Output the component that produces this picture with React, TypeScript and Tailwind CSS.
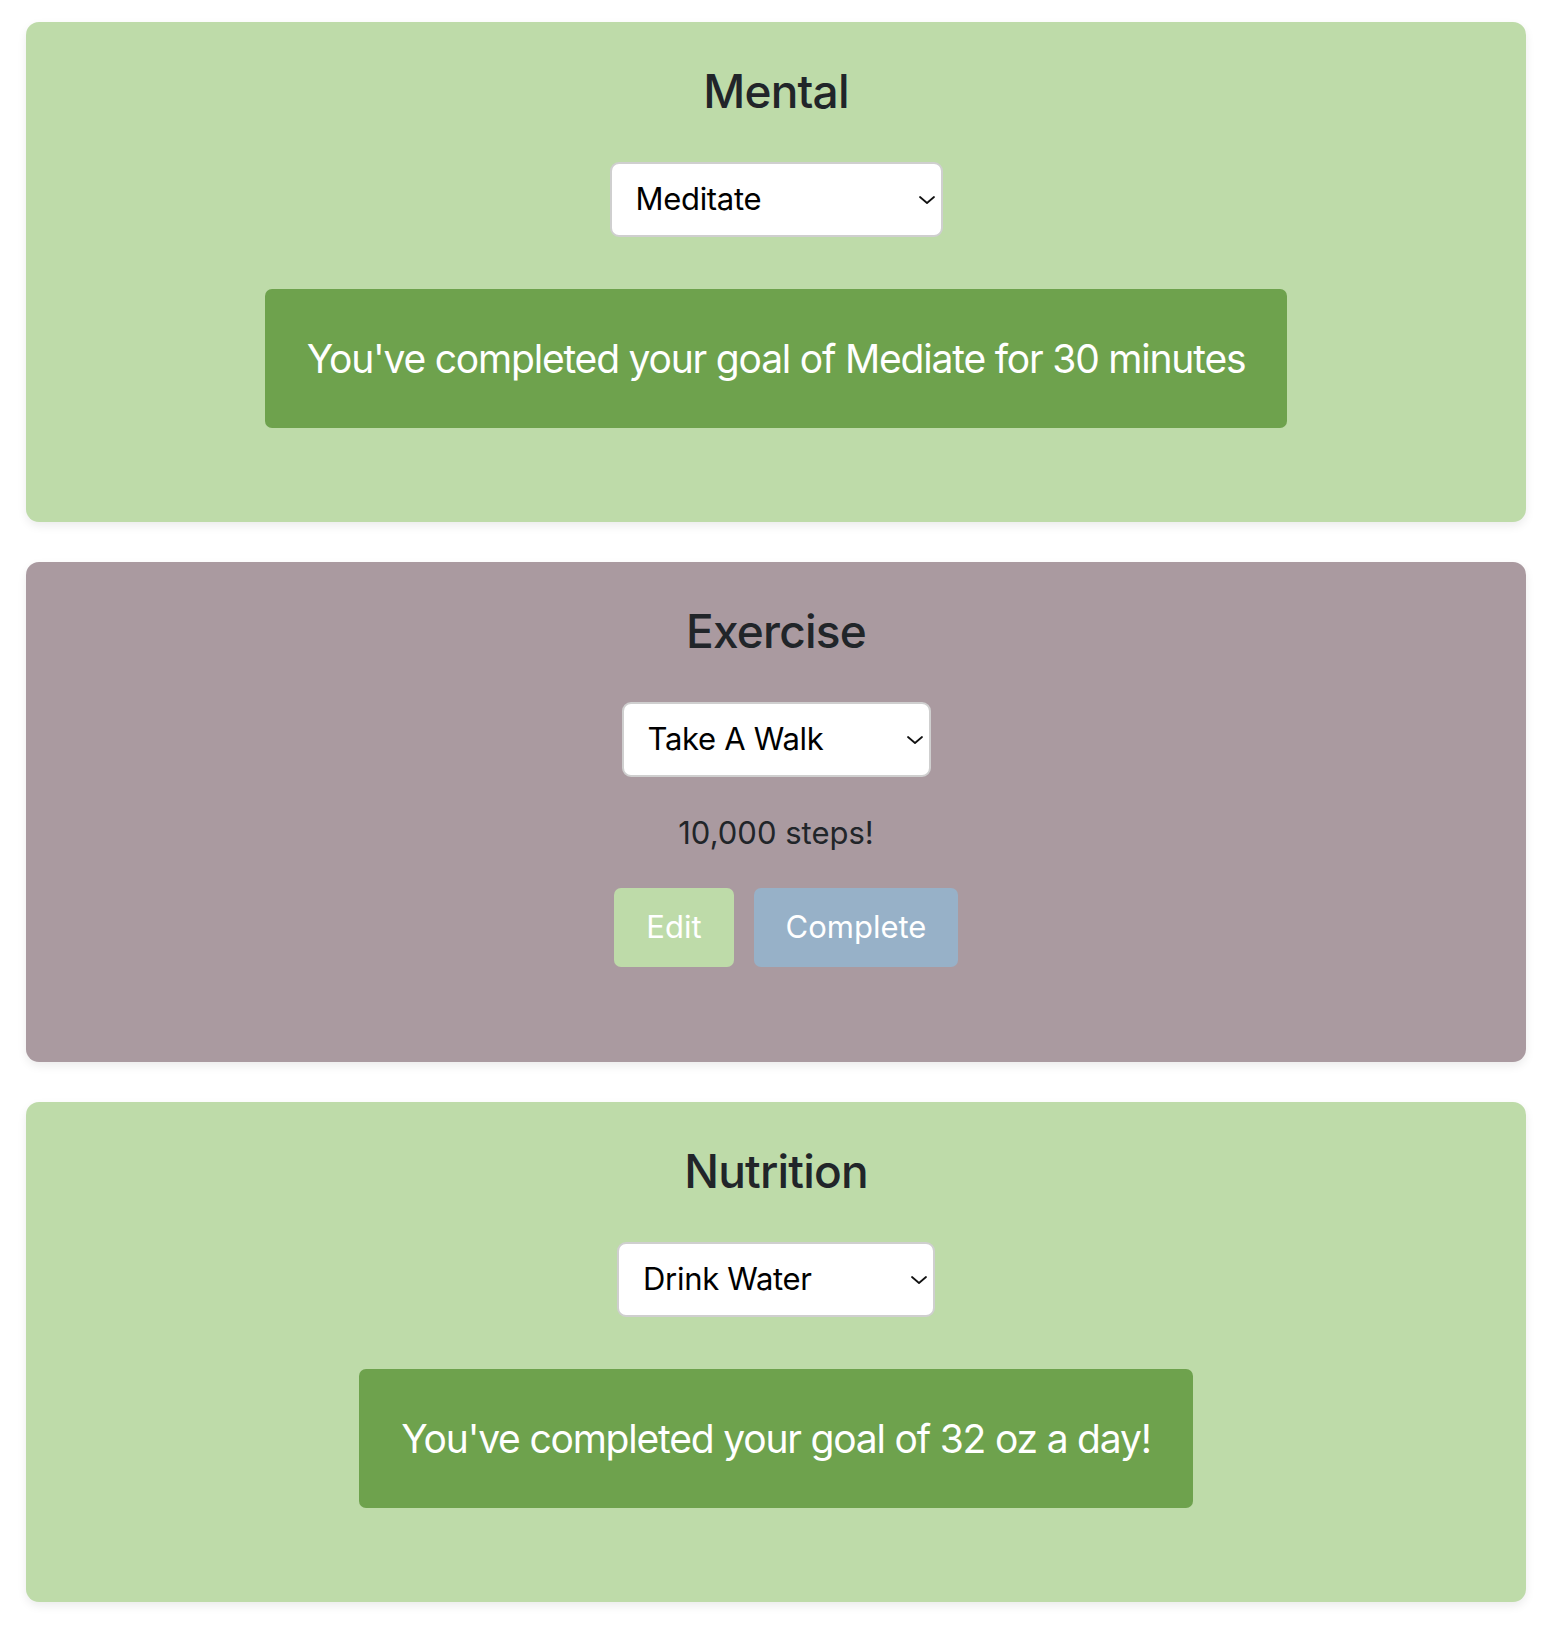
import { useState } from "react";

type Goal = {
  title: string;
  bg: string;
  options: string[];
  selected: string;
  selectWidth: string;
  done?: string;
  target?: string;
};

const goals: Goal[] = [
  {
    title: "Mental",
    bg: "bg-[#bedba9]",
    options: ["Meditate", "Journal", "Read A Book"],
    selected: "Meditate",
    selectWidth: "w-[333px]",
    done: "You've completed your goal of Mediate for 30 minutes",
  },
  {
    title: "Exercise",
    bg: "bg-[#aa9aa0]",
    options: ["Take A Walk", "Stretch", "Run"],
    selected: "Take A Walk",
    selectWidth: "w-[309px]",
    target: "10,000 steps!",
  },
  {
    title: "Nutrition",
    bg: "bg-[#bedba9]",
    options: ["Drink Water", "Eat Veggies", "Eat Fruit"],
    selected: "Drink Water",
    selectWidth: "w-[318px]",
    done: "You've completed your goal of 32 oz a day!",
  },
];

function Chevron() {
  return (
    <svg
      viewBox="0 0 18 10"
      className="pointer-events-none absolute right-[7px] top-1/2 h-[10px] w-[18px] -translate-y-1/2"
      fill="none"
      stroke="#111"
      strokeWidth="1.8"
      strokeLinecap="round"
      strokeLinejoin="round"
    >
      <path d="M2 2l7 6 7-6" />
    </svg>
  );
}

function GoalCard({ goal }: { goal: Goal }) {
  const [value, setValue] = useState(goal.selected);

  return (
    <div className={`${goal.bg} flex h-[500px] flex-col items-center rounded-[13px] pt-[40px] shadow-[0_4px_10px_rgba(0,0,0,0.08)]`}>
      <h1 className="text-[46px] font-medium leading-[58px] tracking-[-0.8px] text-[#212529]">{goal.title}</h1>

      <div className={`relative mt-[42px] ${goal.selectWidth}`}>
        <select
          value={value}
          onChange={e => setValue(e.target.value)}
          className="h-[75px] w-full appearance-none rounded-[9px] border-2 border-[#cfcfcf] bg-white pl-[24px] text-[31px] tracking-[-0.3px] text-black outline-none"
        >
          {goal.options.map(o => (
            <option key={o}>{o}</option>
          ))}
        </select>
        <Chevron />
      </div>

      {goal.done && (
        <div className="mt-[52px] rounded-[7px] bg-[#6ea24d] px-[42px] py-[40px] text-[39px] leading-[59px] tracking-[-1.2px] text-white">
          {goal.done}
        </div>
      )}

      {goal.target && (
        <>
          <p className="mt-[32px] text-[31px] leading-[48px] text-[#212529]">{goal.target}</p>
          <div className="ml-[20px] mt-[31px] flex gap-[20px]">
            <button className="h-[79px] w-[120px] rounded-[7px] bg-[#bedba9] text-[31px] text-white">Edit</button>
            <button className="h-[79px] w-[204px] rounded-[7px] bg-[#97b1c8] text-[31px] text-white">Complete</button>
          </div>
        </>
      )}
    </div>
  );
}

export default function App() {
  return (
    <div className="flex min-h-[1632px] flex-col gap-[40px] bg-white pb-[30px] pl-[26px] pr-[24px] pt-[22px] font-['Inter',sans-serif]">
      {goals.map(g => (
        <GoalCard key={g.title} goal={g} />
      ))}
    </div>
  );
}
